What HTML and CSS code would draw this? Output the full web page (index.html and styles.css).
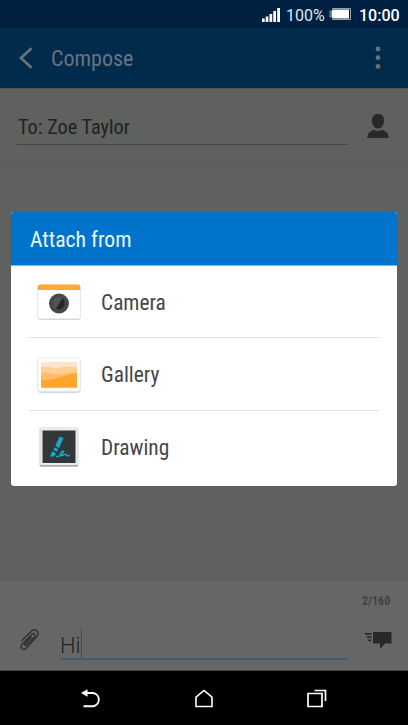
FILE: index.html
```html
<!DOCTYPE html>
<html lang="en">
<head>
<meta charset="utf-8">
<title>Compose</title>
<link rel="stylesheet" href="styles.css">
</head>
<body>
<div class="phone">
  <header class="status">
    <svg class="signal" width="18" height="14" viewBox="0 0 18 14" fill="#fff"><path d="M0 10.500h2.700V14H0zM3.700 8.500h2.700V14H3.700zM7.500 6h2.700v8H7.500zM11.300 3H14v11h-2.700zM15.200 0H18v14h-2.800z"/></svg>
    <span class="percent">100%</span>
    <svg class="battery" width="22" height="12" viewBox="0 0 22 12"><path d="M3.500.5h18v11h-18v-2.500h-2.500v-6h2.500z" fill="none" stroke="#91a3b5"/><path d="M4.500 1.500h15.500v9H4.500L2.500 8V4z" fill="#fff"/></svg>
    <span class="clock">10:00</span>
  </header>
  <div class="appbar">
    <svg class="back" width="14" height="22" viewBox="0 0 14 22"><path d="M12.500 1.300 2 11l10.500 9.700" fill="none" stroke="#68727a" stroke-width="2.800"/></svg>
    <h1 class="title">Compose</h1>
    <svg class="more" width="6" height="24" viewBox="0 0 6 24" fill="#687078"><circle cx="3" cy="3" r="2.400"/><circle cx="3" cy="11.700" r="2.400"/><circle cx="3" cy="20.400" r="2.400"/></svg>
  </div>
  <div class="recipient">
    <div class="to">To: Zoe Taylor</div>
    <svg class="person" width="22" height="24" viewBox="0 0 22 24" fill="#282828"><path d="M11 0c4 0 6 2.600 6 6.500 0 4.500-2.500 8-6 8s-6-3.500-6-8C5 2.600 7 0 11 0z"/><path d="M.3 24c0-4.500 2.500-7 6.500-8.300 2.500 1.700 5.900 1.700 8.400 0 4 1.300 6.500 3.800 6.500 8.300z"/></svg>
  </div>
  <main class="thread"></main>
  <div class="composer">
    <div class="count">2/160</div>
    <div class="entry">
      <svg class="clip" width="20" height="22" viewBox="0 0 20 22" fill="none" stroke="#303030" stroke-width="1.400" stroke-linecap="round" stroke-linejoin="round"><path d="M2 11.500 11.300 2.300c4.300-3.800 9.400 1 5.500 5.200L6.700 18.800c-3.500 3.700-7.500-.2-4.500-3.600L11.500 5.700c2.500-2.200 4.700.2 2.600 2.500L6.500 16c-1.500 1.200-2.500 0-1.400-1.200l6-6.500"/></svg>
      <div class="field">Hi<i class="caret"></i></div>
      <svg class="send" width="28" height="18" viewBox="0 0 28 18" fill="#282828"><path d="M9 0h18.500v11.500H21L16 17v-5.500H9zM.5 1h7v1.700h-6zM2.500 4.300h5V6h-4zM3.700 7.500h3.800v1.700H4.700z"/></svg>
    </div>
  </div>
  <nav class="nav">
    <svg width="20" height="19" viewBox="0 0 20 19"><path d="M6 4h6.300a6.700 6.700 0 0 1 0 13.200H2.500" fill="none" stroke="#fff" stroke-width="1.900"/><path d="M0 4 6.500.2v7.600z" fill="#fff"/></svg>
    <svg width="18" height="19" viewBox="0 0 18 19"><path d="M1 17.500V8.200L9 1.500l8 6.700v9.300z" fill="none" stroke="#fff" stroke-width="1.600"/></svg>
    <svg width="20" height="19" viewBox="0 0 20 19"><path d="M1 4.500h14v13H1zM7.500 1.500h11v10.500" fill="none" stroke="#fff" stroke-width="1.700"/></svg>
  </nav>
  <section class="dialog">
    <h2 class="heading">Attach from</h2>
    <ul class="options">
      <li class="option">
        <svg class="icon" width="46" height="40" viewBox="0 0 46 40"><rect x="1.500" y="3.500" width="43" height="34.500" rx="3" fill="#d8d8d8"/><rect x="1.700" y="3" width="42.600" height="33.700" rx="2.500" fill="#fff" stroke="#ddd" stroke-width=".5"/><path d="M1.700 8V5a2.500 2.500 0 0 1 2.500-2.500h37.600A2.500 2.500 0 0 1 44.300 5v3z" fill="#ffa834"/><circle cx="23" cy="21.500" r="10" fill="#484848"/><circle cx="23" cy="21.500" r="6.200" fill="#555"/><path d="m26.200 16.200-6.400 10.600A6.200 6.200 0 0 0 26.200 16.200z" fill="#272727"/></svg>
        <span>Camera</span>
      </li>
      <li class="option">
        <svg class="icon" width="46" height="40" viewBox="0 0 46 40"><rect x="1.500" y="3.500" width="43" height="34.500" rx="3.500" fill="#d5d5d5"/><rect x="1.700" y="3" width="42.600" height="33.500" rx="3" fill="#fff" stroke="#ddd" stroke-width=".6"/><path d="M5 7h36v25.500H5z" fill="#ffe5c7"/><path d="M5 12q5-1 10 .5t10 0 16-.5v20.500H5z" fill="#ffcf96"/><path d="M5 18q6-1 12 .5t12 0 12-1v15H5z" fill="#ffbd68"/><path d="M5 24.500q9 1.500 16-1.500 10-3 20-5v14.500H5z" fill="#ffa52b"/></svg>
        <span>Gallery</span>
      </li>
      <li class="option">
        <svg class="icon" width="46" height="40" viewBox="0 0 46 40"><rect x="3.700" y=".7" width="38.500" height="39" rx="1.500" fill="#aaa"/><rect x="4.200" y="1" width="37.600" height="37" rx="1.200" fill="#ececec"/><path d="M6.500 3.500h33V36h-33z" fill="#31373b"/><path d="m23.500 9.500 4 1.600-4.400 9.800-3.800-2zM18.600 20.200l3.600 2-1.200 2.600-3.600-1.900zM16.300 24.300l3.500 1.900c0 2.400-2.300 4-6 3.500 1.500-1.400 1-3.500 2.500-5.400z" fill="#16a9c8"/><path d="M20 29.500c5 .5 9.500-5.500 7-5.500-3 .6-3.500 5.500-.5 4.500 2-.8 2.500-2 3.700-1.200.7.600-.5 1.700 1 1.700s1.700-1 2.600-1" fill="none" stroke="#16a9c8" stroke-width="1.300"/></svg>
        <span>Drawing</span>
      </li>
    </ul>
  </section>
</div>
</body>
</html>
```

FILE: styles.css
```css
* { box-sizing: border-box; }
body { margin: 0; font-family: Roboto, sans-serif; }
svg { display: block; flex: none; }
h1, h2, ul { margin: 0; padding: 0; font-weight: 400; list-style: none; }
.phone { position: relative; width: 408px; height: 725px; display: flex; flex-direction: column; overflow: hidden; background: #5f615f; }
.title, .to, .count, .heading, .option { font-stretch: 75%; white-space: nowrap; }
.status { height: 28px; flex: none; display: flex; align-items: center; justify-content: flex-end; padding: 2px 9px 0 0; background: #002042; color: #fff; }
.signal { margin-right: 6px; }
.percent { font-size: 16px; width: 40px; color: #d9e9f5; }
.battery { margin: 0 8px 2px 3px; }
.clock { font-size: 16px; font-weight: 500; width: 40px; white-space: nowrap; }
.appbar { height: 60px; flex: none; display: flex; align-items: center; padding: 0 27px 0 19px; background: #002b4d; color: #68747d; }
.title { flex: 1; margin-left: 18px; font-size: 22px; line-height: 26px; padding-top: 2px; }
.recipient { height: 75px; flex: none; display: flex; align-items: flex-start; padding: 0 19px 0 17px; border-top: 1px solid #505557; border-bottom: 1px solid #595b59; }
.to { width: 331px; height: 56px; padding: 24px 0 0 1px; border-bottom: 1px solid #484a49; color: #222; font-size: 20.3px; line-height: 28px; }
.person { margin: 25px 0 0 19px; }
.thread { flex: 1; }
.composer { height: 90px; flex: none; background: #666; color: #303030; border-bottom: 1px solid #454545; }
.count { height: 41px; padding: 13px 0 0 362px; color: #424242; font-size: 12px; line-height: 15px; font-weight: 700; }
.entry { display: flex; align-items: flex-start; padding: 0 15px 0 20px; }
.clip { margin-top: 7px; }
.field { display: flex; align-items: flex-end; width: 288px; height: 38px; margin: 0 16px 0 20px; border-bottom: 2px solid #3c5f6c; font-weight: 300; font-size: 22px; line-height: 25px; color: #222; }
.caret { width: 1px; height: 29px; background: #484848; }
.send { margin-top: 10px; }
.nav { height: 54px; flex: none; display: flex; justify-content: space-between; align-items: center; padding: 0 81px; background: #000; }
.dialog { position: absolute; left: 11px; top: 212px; width: 386px; height: 274px; overflow: hidden; border-radius: 3px; background: #fff; }
.heading { height: 54px; padding: 14px 0 0 19px; background: #0073ca; border-bottom: 1px solid #70b8ee; color: #eaf9ff; font-size: 21.7px; line-height: 28px; }
.options { padding: 0 18px; }
.option { height: 72.4px; display: flex; align-items: center; padding: 1px 0 0 7px; border-bottom: 1px solid #e2e2e2; color: #464646; font-size: 21.4px; }
.option:last-child { border: 0; }
.icon { margin-right: 19px; }
```
